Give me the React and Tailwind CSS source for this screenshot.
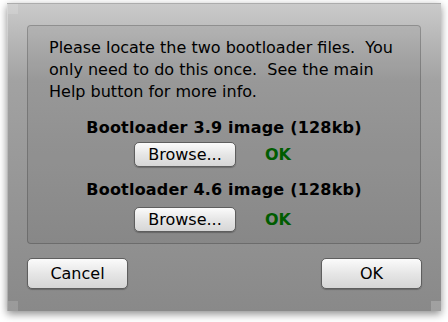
export default function App() {
  const btn =
    "rounded-[5px] border border-[#5e5e5e] bg-gradient-to-b from-[#fbfbfb] via-[#e6e6e6] to-[#d6d6d6] text-[16px] text-black shadow-[0_1px_1px_rgba(0,0,0,0.25)] leading-none";

  return (
    <div className="h-[322px] w-[448px] bg-white pl-[7px] pt-[3px] font-['DejaVu_Sans',sans-serif]">
      <div className="relative flex h-[308px] w-[434px] flex-col border-l border-t border-white/30 bg-gradient-to-b from-[#cacaca] via-[#a2a2a2] via-25% to-[#898989] px-[19px] pt-[21px] shadow-[0_3px_8px_rgba(0,0,0,0.45)]">
        <div className="absolute left-0 top-0 h-[10px] w-[10px] bg-white/15" />
        <div className="absolute bottom-0 left-0 h-[10px] w-[10px] bg-white/15" />
        <div className="absolute bottom-0 right-0 h-[10px] w-[10px] bg-white/20" />

        <div className="flex h-[219px] w-[394px] flex-col rounded-[4px] border border-black/20 bg-black/[0.06] pt-[11px]">
          <p className="w-full pl-[21px] text-[16px] leading-[22px] text-black">
            Please locate the two bootloader files.&nbsp; You
            <br />
            only need to do this once.&nbsp; See the main
            <br />
            Help button for more info.
          </p>

          <div className="mt-[15px] text-center text-[16px] font-bold leading-[20px] tracking-[0.2px] text-black">
            Bootloader 3.9 image (128kb)
          </div>
          <div className="mt-[4px] flex items-center pl-[106px]">
            <button className={`${btn} h-[25px] w-[102px]`}>Browse...</button>
            <span className="ml-[29px] text-[16px] font-bold text-[#005c00]">OK</span>
          </div>

          <div className="mt-[13px] text-center text-[16px] font-bold leading-[20px] tracking-[0.2px] text-black">
            Bootloader 4.6 image (128kb)
          </div>
          <div className="mt-[7px] flex items-center pl-[106px]">
            <button className={`${btn} h-[25px] w-[102px]`}>Browse...</button>
            <span className="ml-[29px] text-[16px] font-bold text-[#005c00]">OK</span>
          </div>
        </div>

        <div className="mt-[14px] flex justify-between">
          <button className={`${btn} h-[31px] w-[101px]`}>Cancel</button>
          <button className={`${btn} h-[31px] w-[101px]`}>OK</button>
        </div>
      </div>
    </div>
  );
}
